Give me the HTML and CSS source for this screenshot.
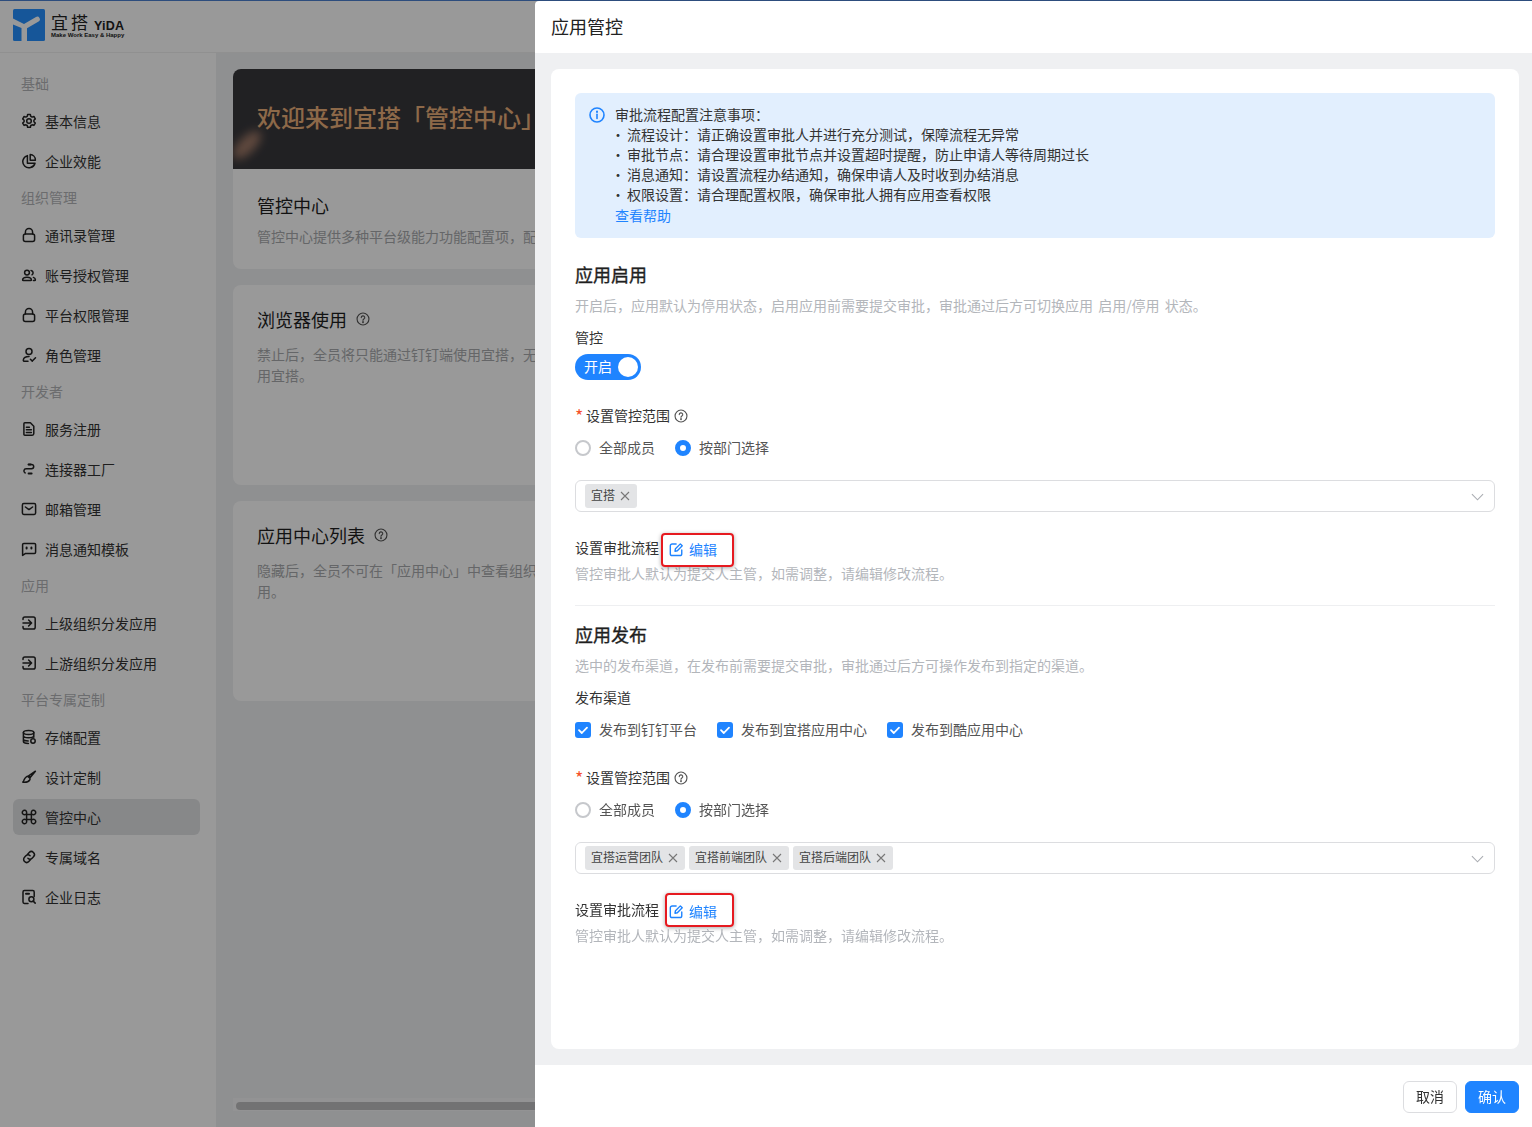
FILE: index.html
```html
<!DOCTYPE html>
<html lang="zh-CN">
<head>
<meta charset="utf-8">
<title>应用管控</title>
<link rel="stylesheet" href="styles.css">
</head>
<body>
<svg class="defs" width="0" height="0" aria-hidden="true">
  <symbol id="i-gear" viewBox="0 0 16 16"><path d="M6.6 1.6h2.8l.4 1.8 1.3.7 1.8-.6 1.4 2.4-1.4 1.3v1.5l1.4 1.3-1.4 2.4-1.8-.6-1.3.7-.4 1.8H6.6l-.4-1.8-1.3-.7-1.8.6-1.4-2.4 1.4-1.3V7.2L1.7 5.9l1.4-2.4 1.8.6 1.3-.7z"/><circle cx="8" cy="8" r="2.3"/></symbol>
  <symbol id="i-pie" viewBox="0 0 16 16"><path d="M6.4 2.6A6.2 6.2 0 1 0 14 10.2H6.4z"/><path d="M9.2 1.6a5.6 5.6 0 0 1 5.2 5.6H9.2z"/></symbol>
  <symbol id="i-lock" viewBox="0 0 16 16"><path d="M4.4 7V5.2a3.6 3.6 0 0 1 7.2 0V7"/><rect x="2.4" y="7" width="11.2" height="7.4" rx="2"/></symbol>
  <symbol id="i-users" viewBox="0 0 16 16"><circle cx="6" cy="5.6" r="2.4"/><path d="M1.6 13c0-1.8 2-2.8 4.4-2.8s4.4 1 4.4 2.8c0 .5-.4.6-.8.6H2.4c-.4 0-.8-.1-.8-.6z"/><path d="M10 3.4a2.4 2.4 0 0 1 1 4.4M12.4 10.4c1.2.4 2 1.2 2 2.4 0 .5-.3.8-.8.8h-1.2"/></symbol>
  <symbol id="i-usercheck" viewBox="0 0 16 16"><circle cx="8" cy="4.6" r="3"/><path d="M7 14.2H3.4c-.7 0-1.2-.5-1.1-1.2.3-2 2.6-3.4 5.7-3.4M9.4 12.2l1.9 1.9 3.2-3.4"/></symbol>
  <symbol id="i-doc" viewBox="0 0 16 16"><path d="M3.8 1.8h5.6l3.4 3.4v7.4c0 .9-.7 1.6-1.6 1.6H3.8c-.5 0-.9-.4-.9-.9V2.7c0-.5.4-.9.9-.9z"/><path d="M5.4 6.2h3M5.4 8.8h5M5.4 11.4h5"/></symbol>
  <symbol id="i-conn" viewBox="0 0 16 16"><path d="M7.5 3.4h3a2.2 2.2 0 0 1 0 4.4H5.2a2.2 2.2 0 0 0-1 4.2"/><path class="thick" d="M7.6 3.4h2M7.6 12.4h3"/></symbol>
  <symbol id="i-mail" viewBox="0 0 16 16"><rect x="1.4" y="2.6" width="13.2" height="10.8" rx="1.4"/><path d="M4.4 6l3.6 2.6L11.6 6"/></symbol>
  <symbol id="i-chat" viewBox="0 0 16 16"><path d="M2.8 2.4h10.6c.7 0 1.2.5 1.2 1.2v7.6c0 .7-.5 1.2-1.2 1.2H4.6l-3 2V3.6c0-.7.5-1.2 1.2-1.2z"/><path class="thick" d="M5.6 6.4v1.2M10.4 6.4v1.2"/></symbol>
  <symbol id="i-enter" viewBox="0 0 16 16"><path d="M2 4.4V3.8c0-1 .8-1.8 1.8-1.8h8.6c1 0 1.8.8 1.8 1.8v8.4c0 1-.8 1.8-1.8 1.8H3.8c-1 0-1.8-.8-1.8-1.8v-.6"/><path d="M2 8h8.4M7.6 5l3 3-3 3"/></symbol>
  <symbol id="i-db" viewBox="0 0 16 16"><ellipse cx="7.6" cy="3.6" rx="5.2" ry="2"/><path d="M2.4 3.6v9c0 1.1 2.2 1.9 5 1.9M12.8 3.6v4.6M2.4 6.8c0 1.1 2.3 2 5.2 2s5.2-.9 5.2-2M2.4 10c0 1.1 2.2 1.9 4.8 2"/><circle cx="12" cy="12" r="2.2"/></symbol>
  <symbol id="i-brush" viewBox="0 0 16 16"><path d="M14.4 2.2L7.6 6.8l1.6 1.6z"/><path d="M7 7.4l1.8 1.8c.4.4.3 1.2-.1 1.8-1 1.5-3.6 2.6-6.9 2.2 1.2-1 .9-2 1.7-3.2.8-1.3 2.6-3.2 3.5-2.6z"/></symbol>
  <symbol id="i-cmd" viewBox="0 0 16 16"><path d="M5.6 5.6h4.8v4.8H5.6zM5.6 5.6H4a2.2 2.2 0 1 1 1.6-1.6zM10.4 5.6V4A2.2 2.2 0 1 1 12 5.6zM10.4 10.4H12A2.2 2.2 0 1 1 10.4 12zM5.6 10.4V12A2.2 2.2 0 1 1 4 10.4z"/></symbol>
  <symbol id="i-link" viewBox="0 0 16 16"><path d="M6.6 5.2l1.6-1.7a3 3 0 0 1 4.3 4.2l-1.4 1.5a3 3 0 0 1-4.2.1"/><path d="M9.4 10.8l-1.6 1.7a3 3 0 0 1-4.3-4.2l1.4-1.5a3 3 0 0 1 4.2-.1"/></symbol>
  <symbol id="i-logs" viewBox="0 0 16 16"><path d="M7 14.4H3.4c-.8 0-1.4-.6-1.4-1.4V3c0-.8.6-1.4 1.4-1.4h8.4c.8 0 1.4.6 1.4 1.4v4.6"/><path class="thick" d="M5 4.8h3"/><circle cx="10.4" cy="10.2" r="2.5"/><path d="M12.2 12.1l2 2"/></symbol>
  <symbol id="i-help" viewBox="0 0 16 16"><circle cx="8" cy="8" r="6.8"/><path d="M6 6.4a2 2 0 1 1 3 1.7c-.6.4-1 .7-1 1.4"/><path class="thick" d="M8 11.4v.4"/></symbol>
  <symbol id="i-x" viewBox="0 0 10 10"><path d="M1 1l8 8M9 1l-8 8"/></symbol>
  <symbol id="i-edit" viewBox="0 0 16 16"><path d="M7.6 2.2H3.4a2 2 0 0 0-2 2v8.2a2 2 0 0 0 2 2h8.2a2 2 0 0 0 2-2V8.4"/><path d="M6.4 9.8l.5-2.6 5.2-5.2 2 2-5.2 5.3z"/></symbol>
</svg>

<div class="app">
  <header class="topbar">
    <svg class="logo-mark" viewBox="0 0 32 32" aria-hidden="true"><rect width="32" height="32" rx="1.5" class="logo-bg"/><path class="logo-y" d="M0 9.5L11 15l12-7a2.5 2.5 0 0 1 2.6 4.4L14 19.2V32H8.5V19L0 15.5z"/></svg>
    <div class="logo-text">
      <div class="logo-name"><span class="logo-cn">宜搭</span><span class="logo-en">YiDA</span></div>
      <div class="logo-tag">Make Work Easy &amp; Happy</div>
    </div>
  </header>
  <div class="shell">
    <nav class="sidebar">
      <div class="nav-group">基础</div>
      <a class="nav-item"><svg class="nav-icon"><use href="#i-gear"/></svg>基本信息</a>
      <a class="nav-item"><svg class="nav-icon"><use href="#i-pie"/></svg>企业效能</a>
      <div class="nav-group">组织管理</div>
      <a class="nav-item"><svg class="nav-icon"><use href="#i-lock"/></svg>通讯录管理</a>
      <a class="nav-item"><svg class="nav-icon"><use href="#i-users"/></svg>账号授权管理</a>
      <a class="nav-item"><svg class="nav-icon"><use href="#i-lock"/></svg>平台权限管理</a>
      <a class="nav-item"><svg class="nav-icon"><use href="#i-usercheck"/></svg>角色管理</a>
      <div class="nav-group">开发者</div>
      <a class="nav-item"><svg class="nav-icon"><use href="#i-doc"/></svg>服务注册</a>
      <a class="nav-item"><svg class="nav-icon"><use href="#i-conn"/></svg>连接器工厂</a>
      <a class="nav-item"><svg class="nav-icon"><use href="#i-mail"/></svg>邮箱管理</a>
      <a class="nav-item"><svg class="nav-icon"><use href="#i-chat"/></svg>消息通知模板</a>
      <div class="nav-group">应用</div>
      <a class="nav-item"><svg class="nav-icon"><use href="#i-enter"/></svg>上级组织分发应用</a>
      <a class="nav-item"><svg class="nav-icon"><use href="#i-enter"/></svg>上游组织分发应用</a>
      <div class="nav-group">平台专属定制</div>
      <a class="nav-item"><svg class="nav-icon"><use href="#i-db"/></svg>存储配置</a>
      <a class="nav-item"><svg class="nav-icon"><use href="#i-brush"/></svg>设计定制</a>
      <a class="nav-item is-active"><svg class="nav-icon"><use href="#i-cmd"/></svg>管控中心</a>
      <a class="nav-item"><svg class="nav-icon"><use href="#i-link"/></svg>专属域名</a>
      <a class="nav-item"><svg class="nav-icon"><use href="#i-logs"/></svg>企业日志</a>
    </nav>
    <main class="content">
      <section class="card card-intro">
        <div class="banner"><span class="banner-glow"></span><span class="banner-title">欢迎来到宜搭「管控中心」</span></div>
        <div class="card-body">
          <h2 class="card-title">管控中心</h2>
          <p class="card-desc">管控中心提供多种平台级能力功能配置项，配置后将对组织内全部应用生效。</p>
        </div>
      </section>
      <section class="card card-tall">
        <div class="card-body">
          <h2 class="card-title">浏览器使用<svg class="help help-lg"><use href="#i-help"/></svg></h2>
          <p class="card-desc">禁止后，全员将只能通过钉钉端使用宜搭，无<br>用宜搭。</p>
        </div>
      </section>
      <section class="card card-tall">
        <div class="card-body">
          <h2 class="card-title">应用中心列表<svg class="help help-lg"><use href="#i-help"/></svg></h2>
          <p class="card-desc">隐藏后，全员不可在「应用中心」中查看组织<br>用。</p>
        </div>
      </section>
      <div class="hscroll"><span class="hscroll-thumb"></span></div>
    </main>
  </div>
</div>

<div class="mask"></div>

<aside class="drawer">
  <div class="drawer-head">应用管控</div>
  <div class="drawer-body">
    <div class="panel">
      <div class="alert">
        <svg class="alert-icon" viewBox="0 0 16 16" aria-hidden="true"><circle cx="8" cy="8" r="7"/><path d="M8 7.2v4.2"/><path class="thick" d="M8 4.4v.5"/></svg>
        <div class="alert-text">
          <div>审批流程配置注意事项：</div>
          <div class="alert-row"><span class="dot">·</span>流程设计：请正确设置审批人并进行充分测试，保障流程无异常</div>
          <div class="alert-row"><span class="dot">·</span>审批节点：请合理设置审批节点并设置超时提醒，防止申请人等待周期过长</div>
          <div class="alert-row"><span class="dot">·</span>消息通知：请设置流程办结通知，确保申请人及时收到办结消息</div>
          <div class="alert-row"><span class="dot">·</span>权限设置：请合理配置权限，确保审批人拥有应用查看权限</div>
          <div class="alert-link"><a>查看帮助</a></div>
        </div>
      </div>

      <h3 class="sec-title">应用启用</h3>
      <p class="hint sec-hint sec-hint-spaced">开启后，应用默认为停用状态，启用应用前需要提交审批，审批通过后方可切换应用 启用/停用 状态。</p>
      <div class="label sec-label">管控</div>
      <div class="switch"><span class="switch-text">开启</span><span class="switch-knob"></span></div>

      <div class="label scope-label scope-gap-a"><span class="req">*</span>设置管控范围<svg class="help help-sm"><use href="#i-help"/></svg></div>
      <div class="radios">
        <label class="radio"><span class="radio-dot"></span>全部成员</label>
        <label class="radio"><span class="radio-dot is-on"></span>按部门选择</label>
      </div>
      <div class="select">
        <span class="tag">宜搭<svg class="tag-x"><use href="#i-x"/></svg></span>
        <svg class="chev" viewBox="0 0 14 8" aria-hidden="true"><path d="M1 1l6 6 6-6"/></svg>
      </div>
      <div class="flow">
        <span class="label">设置审批流程</span>
        <a class="edit"><svg class="edit-icon"><use href="#i-edit"/></svg>编辑</a>
        <span class="callout callout-a"></span>
      </div>
      <p class="hint flow-hint">管控审批人默认为提交人主管，如需调整，请编辑修改流程。</p>

      <div class="divider"></div>

      <h3 class="sec-title sec-title-b">应用发布</h3>
      <p class="hint sec-hint">选中的发布渠道，在发布前需要提交审批，审批通过后方可操作发布到指定的渠道。</p>
      <div class="label sec-label">发布渠道</div>
      <div class="checks">
        <label class="check"><svg class="check-box" viewBox="0 0 16 16" aria-hidden="true"><rect width="16" height="16" rx="3"/><path d="M4 8.2l2.8 2.8L12 5.6"/></svg>发布到钉钉平台</label>
        <label class="check"><svg class="check-box" viewBox="0 0 16 16" aria-hidden="true"><rect width="16" height="16" rx="3"/><path d="M4 8.2l2.8 2.8L12 5.6"/></svg>发布到宜搭应用中心</label>
        <label class="check"><svg class="check-box" viewBox="0 0 16 16" aria-hidden="true"><rect width="16" height="16" rx="3"/><path d="M4 8.2l2.8 2.8L12 5.6"/></svg>发布到酷应用中心</label>
      </div>

      <div class="label scope-label scope-gap-b"><span class="req">*</span>设置管控范围<svg class="help help-sm"><use href="#i-help"/></svg></div>
      <div class="radios">
        <label class="radio"><span class="radio-dot"></span>全部成员</label>
        <label class="radio"><span class="radio-dot is-on"></span>按部门选择</label>
      </div>
      <div class="select">
        <span class="tag">宜搭运营团队<svg class="tag-x"><use href="#i-x"/></svg></span>
        <span class="tag">宜搭前端团队<svg class="tag-x"><use href="#i-x"/></svg></span>
        <span class="tag">宜搭后端团队<svg class="tag-x"><use href="#i-x"/></svg></span>
        <svg class="chev" viewBox="0 0 14 8" aria-hidden="true"><path d="M1 1l6 6 6-6"/></svg>
      </div>
      <div class="flow">
        <span class="label">设置审批流程</span>
        <a class="edit"><svg class="edit-icon"><use href="#i-edit"/></svg>编辑</a>
        <span class="callout callout-b"></span>
      </div>
      <p class="hint flow-hint">管控审批人默认为提交人主管，如需调整，请编辑修改流程。</p>
    </div>
  </div>
  <div class="drawer-foot">
    <button class="btn">取消</button>
    <button class="btn btn-primary">确认</button>
  </div>
</aside>
</body>
</html>
```
FILE: styles.css
```css
* { box-sizing: border-box; }
html, body { margin: 0; height: 100%; overflow: hidden; }
body {
  font-family: "Noto Sans CJK SC", "Noto Sans", "Liberation Sans", sans-serif;
  font-size: 14px;
  line-height: 20px;
  color: #333;
  background: #fff;
}
p, h2, h3 { margin: 0; }
.defs { position: absolute; }
.thick { stroke-width: 2; }

/* background app */
.app { height: 1127px; display: flex; flex-direction: column; border-top: 1px solid #4b80d0; }
.topbar { height: 52px; flex: none; display: flex; align-items: center; padding: 0 0 4px 13px; gap: 6px; background: #fff; border-bottom: 1px solid #f0f0f0; }
.logo-mark { width: 32px; height: 32px; flex: none; }
.logo-bg { fill: #2590ff; }
.logo-y { fill: #fff; }
.logo-text { display: flex; flex-direction: column; color: #222; }
.logo-name { display: flex; align-items: flex-end; height: 20px; margin-top: 1px; }
.logo-cn { font-size: 17px; letter-spacing: 3px; line-height: 20px; }
.logo-en { font-family: "Liberation Sans", sans-serif; font-size: 12.5px; font-weight: 700; margin: 0 0 -2px 3px; letter-spacing: .2px; line-height: 15px; }
.logo-tag { font-family: "Liberation Sans", sans-serif; font-size: 6px; line-height: 8px; font-weight: 700; white-space: nowrap; margin-top: -1px; }

.shell { flex: 1; display: flex; min-height: 0; }
.sidebar { width: 216px; flex: none; background: #fff; padding: 12px 16px 0 13px; }
.nav-group { height: 36px; line-height: 36px; margin-bottom: 2px; padding-left: 8px; color: #b3b5b8; }
.nav-item { height: 36px; display: flex; align-items: center; gap: 8px; padding-left: 8px; border-radius: 6px; color: #333; }
.nav-item + .nav-item { margin-top: 4px; }
.nav-item.is-active { background: #e2e3e5; }
.nav-icon { width: 16px; height: 16px; flex: none; fill: none; stroke: #222; stroke-width: 1.5; stroke-linejoin: round; stroke-linecap: round; }

.content { flex: 1; min-width: 0; background: #eff0f2; padding: 16px 16px 0 17px; position: relative; }
.card { background: #fff; border-radius: 8px; overflow: hidden; margin-bottom: 16px; height: 200px; }
.banner { height: 100px; background: #37373b; position: relative; overflow: hidden; padding: 30px 24px 0; }
.banner-title { display: block; font-size: 24px; line-height: 36px; color: #ebb07a; font-weight: 500; white-space: nowrap; position: relative; }
.banner-glow { position: absolute; left: -4px; top: 68px; width: 36px; height: 16px; border-radius: 50%; background: #a07a68; filter: blur(5px); transform: rotate(-45deg); }
.card-body { padding: 19px 24px; }
.card-intro .card-body { padding-top: 21px; }
.card-title { font-size: 18px; line-height: 30px; font-weight: 400; color: #1f1f1f; display: flex; align-items: center; }
.card-desc { margin-top: 5px; color: #a9abae; line-height: 22px; }
.card-tall .card-desc { margin-top: 10px; line-height: 21px; }
.help { width: 14px; height: 14px; margin-left: 4px; fill: none; stroke: #555; stroke-width: 1.3; stroke-linecap: round; flex: none; }
.help-sm { margin-top: 2px; }
.help-lg { margin-left: 9px; }
.hscroll { position: absolute; left: 17px; right: 2px; top: 1045px; height: 13px; padding: 4px 3px 1px; background: #f6f6f7; }
.hscroll-thumb { display: block; width: 60%; height: 8px; border-radius: 4px; background: #bfbfc0; }

.mask { position: fixed; inset: 0; background: rgba(0,0,0,.4); }

/* drawer */
.drawer { position: fixed; top: 1px; bottom: 0; right: 0; width: 997px; background: #fff; display: flex; flex-direction: column; border-top-left-radius: 4px; }
.drawer-head { height: 52px; flex: none; font-size: 18px; line-height: 50px; padding-left: 16px; color: #222; }
.drawer-body { flex: 1; min-height: 0; background: #eff0f2; padding: 16px 13px 16px 16px; }
.panel { height: 100%; background: #fff; border-radius: 8px; padding: 24px; }
.drawer-foot { height: 62px; flex: none; display: flex; justify-content: flex-end; align-items: center; gap: 8px; padding: 2px 13px 0 0; }
.btn { width: 54px; height: 32px; font: inherit; line-height: 20px; border: 1px solid #dcdde0; background: #fff; color: #333; border-radius: 6px; padding: 0 0 2px; }
.btn-primary { background: #1f84ff; border-color: #1f84ff; color: #fff; }

.alert { height: 145px; background: #e2effe; border-radius: 6px; padding: 11px 14px; display: flex; gap: 10px; }
.alert-icon { width: 16px; height: 16px; flex: none; margin-top: 3px; fill: none; stroke: #1f84ff; stroke-width: 1.6; stroke-linecap: round; }
.alert-text { flex: 1; color: #333; }
.alert-row { display: flex; }
.dot { width: 16px; margin-left: -4px; flex: none; }
.alert-link { line-height: 22px; color: #1f84ff; }
.alert-link a { color: inherit; }

.sec-title { font-size: 18px; line-height: 24px; padding-bottom: 4px; font-weight: 400; -webkit-text-stroke: .35px #1f1f1f; color: #1f1f1f; margin-top: 24px; }
.sec-title-b { margin-top: 16px; }
.hint { color: #b3b6bb; padding-bottom: 2px; }
.sec-hint { margin-top: 5px; }
.sec-hint-spaced { word-spacing: 2px; }
.label { color: #333; padding-bottom: 2px; }
.sec-label { margin-top: 10px; }

.switch { width: 66px; height: 26px; margin-top: 5px; background: #1f84ff; border-radius: 13px; display: flex; align-items: center; justify-content: space-between; padding: 0 3px 0 9px; color: #fff; }
.switch-knob { width: 20px; height: 20px; border-radius: 50%; background: #fff; }
.switch-text { padding-bottom: 2px; }

.scope-label { display: flex; align-items: center; }
.scope-gap-a { margin-top: 25px; }
.scope-gap-b { margin-top: 26px; }
.req { width: 11px; color: #f5532d; font-size: 18px; line-height: 20px; }

.radios { margin-top: 10px; display: flex; gap: 20px; color: #555; padding-bottom: 2px; }
.radio { display: flex; align-items: center; gap: 8px; }
.radio-dot { width: 16px; height: 16px; margin-top: 2px; border: 2px solid #c6c8cc; border-radius: 50%; background: #fff; }
.radio-dot.is-on { border: 5px solid #1f84ff; }

.select { margin-top: 21px; height: 32px; border: 1px solid #dcdde0; border-radius: 6px; padding: 0 9px; display: flex; align-items: center; gap: 4px; position: relative; }
.tag { height: 24px; background: #e3e4e6; border-radius: 3px; font-size: 12px; line-height: 20px; color: #444; padding: 0 8px 2px 6px; display: inline-flex; align-items: center; gap: 6px; }
.tag-x { width: 10px; height: 10px; margin: 1px -1px 0; fill: none; stroke: #777; stroke-width: 1.1; }
.chev { position: absolute; right: 10px; top: 12px; width: 13px; height: 8px; fill: none; stroke: #aaadb2; stroke-width: 1.2; }

.flow { margin-top: 25px; display: flex; position: relative; height: 22px; }
.edit { display: flex; align-items: center; margin-left: 10px; margin-top: 2px; gap: 5px; color: #1f84ff; height: 20px; }
.edit-icon { width: 15px; height: 15px; fill: none; stroke: #1f84ff; stroke-width: 1.5; stroke-linejoin: round; stroke-linecap: round; }
.callout { position: absolute; border: 2.5px solid #e61a20; border-radius: 4px; box-shadow: 0 1px 4px rgba(0,0,0,.35); }
.callout-a { left: 86px; top: -4px; width: 73px; height: 34px; }
.callout-b { left: 90px; top: -6px; width: 69px; height: 34px; }
.flow-hint { margin-top: 4px; }
.divider { height: 1px; margin-top: 20px; background: #eeeff1; }

.checks { margin-top: 10px; display: flex; color: #555; padding-bottom: 2px; }
.check { display: flex; align-items: center; gap: 8px; margin-right: 20px; }
.check-box { width: 16px; height: 16px; margin-top: 2px; flex: none; fill: #1f84ff; }
.check-box path { fill: none; stroke: #fff; stroke-width: 1.8; stroke-linecap: round; stroke-linejoin: round; }
```
